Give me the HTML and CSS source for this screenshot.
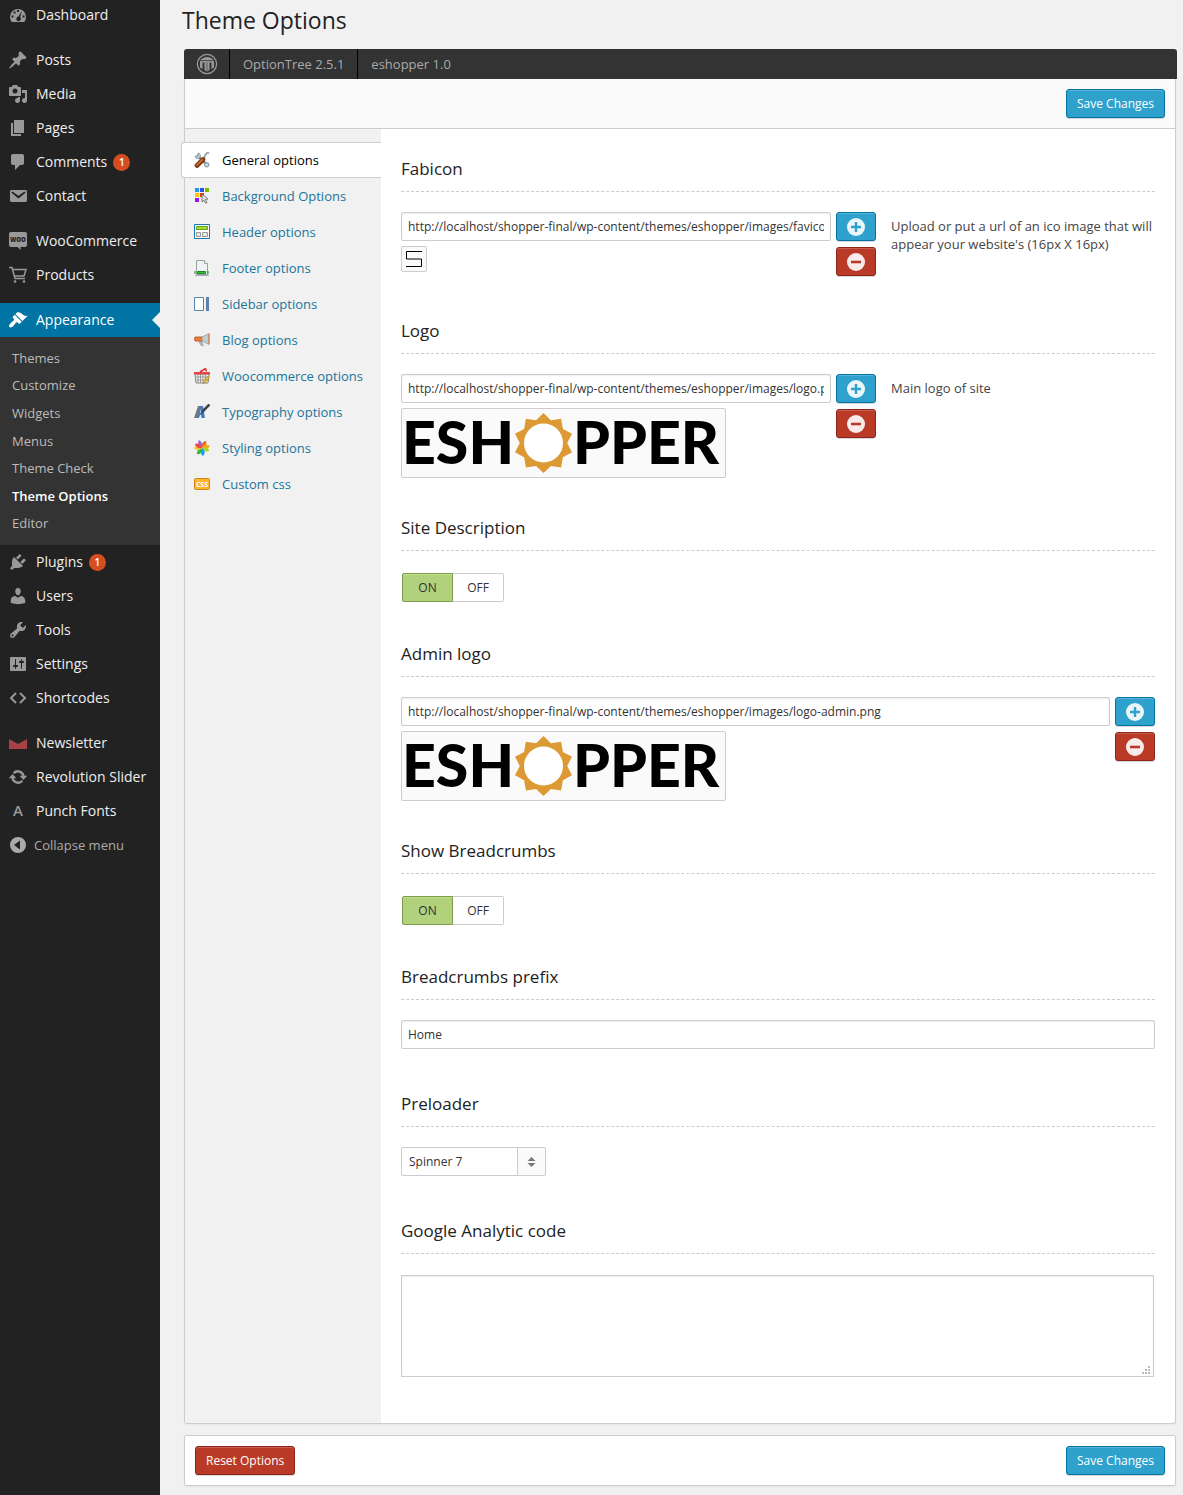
FILE: index.html
```html
<!DOCTYPE html>
<html lang="en">
<head>
<meta charset="utf-8">
<title>Theme Options</title>
<link rel="stylesheet" href="styles.css">
</head>
<body>
<svg class="defs" aria-hidden="true">
  <symbol id="plus" viewBox="0 0 18 18"><circle cx="9" cy="9" r="9" fill="#fff" fill-opacity=".9"/><path d="M9 4v10M4 9h10" stroke="#2ea2cc" stroke-width="2.4"/></symbol>
  <symbol id="minus" viewBox="0 0 18 18"><circle cx="9" cy="9" r="9" fill="#fff" fill-opacity=".9"/><path d="M4 9h10" stroke="#ba3a28" stroke-width="2.6"/></symbol>
</svg>
<div class="layout">
  <nav class="sidebar" aria-label="Main menu">
    <ul class="menu">
      <li><a href="#"><svg class="mi" viewBox="0 0 20 20"><path fill-rule="evenodd" d="M3.800 17h12.400A8 8 0 1 0 3.800 17zM9 5h2v2H9zM5.500 6.500h2v2h-2zM3.500 10.500h2v2h-2zM14.500 10.500h2v2h-2zM13.800 6l-1.600 6.200a2.300 2.300 0 1 1-1.800-.6z"/></svg>Dashboard</a></li>
      <li class="sep"></li>
      <li><a href="#"><svg class="mi" viewBox="0 0 20 20"><path d="M10.440 3.020l1.820-1.820 6.360 6.350-1.830 1.820c-1.050-.68-2.480-.57-3.410.36l-.75.75c-.92.93-1.040 2.350-.35 3.410l-1.830 1.820-2.410-2.410-2.800 2.790c-.42.42-3.380 2.710-3.800 2.290s1.860-3.390 2.280-3.810l2.790-2.790L4.100 9.360l1.830-1.820c1.050.69 2.480.57 3.400-.36l.75-.75c.93-.92 1.050-2.350.36-3.410z"/></svg>Posts</a></li>
      <li><a href="#"><svg class="mi" viewBox="0 0 20 20"><path d="M13 11V4c0-.55-.45-1-1-1h-1.670L9 1H5L3.670 3H2c-.55 0-1 .45-1 1v7c0 .55.45 1 1 1h10c.55 0 1-.45 1-1zM7 4.500c1.380 0 2.500 1.120 2.500 2.500S8.380 9.500 7 9.500 4.500 8.380 4.500 7 5.620 4.500 7 4.500zM14 6h5v10.500c0 1.380-1.120 2.500-2.500 2.500S14 17.880 14 16.500s1.120-2.500 2.500-2.500c.17 0 .34.020.5.050V9h-3V6zm-4 8.050V13h2v3.500c0 1.380-1.120 2.500-2.500 2.500S7 17.880 7 16.500 8.120 14 9.500 14c.17 0 .34.020.5.050z"/></svg>Media</a></li>
      <li><a href="#"><svg class="mi" viewBox="0 0 20 20"><path d="M6 15V2h10v13H6zm-1 1h8v2H3V5h2v11z"/></svg>Pages</a></li>
      <li><a href="#"><svg class="mi" viewBox="0 0 20 20"><path d="M5 2h9c1.100 0 2 .9 2 2v7c0 1.100-.9 2-2 2h-2l-5 5v-5H5c-1.100 0-2-.9-2-2V4c0-1.100.9-2 2-2z"/></svg>Comments <span class="count">1</span></a></li>
      <li><a href="#"><svg class="mi" viewBox="0 0 20 20"><path d="M3.870 4h13.250C18.370 4 19 4.590 19 5.790v8.420c0 1.190-.63 1.790-1.880 1.790H3.870c-1.250 0-1.880-.6-1.880-1.790V5.790c0-1.200.63-1.790 1.880-1.790zm6.620 8.600l6.740-5.530c.24-.2.430-.66.130-1.070-.29-.41-.82-.42-1.170-.17l-5.700 3.860L4.800 5.830c-.35-.25-.88-.24-1.170.17-.3.410-.11.870.130 1.070z"/></svg>Contact</a></li>
      <li class="sep"></li>
      <li><a href="#"><svg class="mi" viewBox="0 0 20 20"><path d="M3 1h14q2 0 2 2v11q0 2-2 2h-4.500v3l-3-3H3q-2 0-2-2V3q0-2 2-2z"/><text x="10" y="11" class="woo">WOO</text></svg>WooCommerce</a></li>
      <li><a href="#"><svg class="mi" viewBox="0 0 20 20"><path d="M1 2.500h3l3 11h10M4.500 4.500H18l-2 6.500H6.500" fill="none" stroke="#999" stroke-width="1.500"/><circle cx="7" cy="16.500" r="1.300"/><circle cx="16" cy="16.500" r="1.300"/></svg>Products</a></li>
      <li class="sep"></li>
      <li class="current"><a href="#"><svg class="mi" viewBox="0 0 20 20"><path d="M14.480 11.060L7.410 3.990l1.500-1.500c.5-.56 2.300-.47 3.510.32 1.210.8 1.430 1.280 2.910 2.100 1.180.64 2.450 1.260 4.450.85zm-.71.71L6.700 4.700 4.930 6.470c-.39.39-.39 1.020 0 1.410l1.060 1.060c.39.39.39 1.030 0 1.420-.6.600-1.430 1.110-2.210 1.690-.35.26-.7.530-1.010.84C1.430 14.230.4 16.080 1.400 17.070c.99 1 2.840-.03 4.180-1.360.31-.31.58-.66.85-1.020.57-.78 1.080-1.610 1.690-2.210.39-.39 1.020-.39 1.410 0l1.060 1.060c.39.39 1.020.39 1.410 0z"/></svg>Appearance</a>
        <ul class="submenu">
          <li><a href="#">Themes</a></li>
          <li><a href="#">Customize</a></li>
          <li><a href="#">Widgets</a></li>
          <li><a href="#">Menus</a></li>
          <li><a href="#">Theme Check</a></li>
          <li><a href="#" class="on" aria-current="page">Theme Options</a></li>
          <li><a href="#">Editor</a></li>
        </ul>
      </li>
      <li><a href="#"><svg class="mi" viewBox="0 0 20 20"><path d="M13.110 4.360L9.870 7.600 8 5.730l3.240-3.240c.35-.34 1.050-.2 1.560.32.520.51.660 1.210.31 1.550zm-8 1.770l.91-1.120 9.010 9.010-1.190.84c-.71.71-2.630 1.160-3.820 1.160H6.140L4.900 17.260c-.59.59-1.540.59-2.120 0-.59-.58-.59-1.530 0-2.120l1.240-1.240v-3.880c0-1.130.4-3.190 1.090-3.890zm7.260 3.970l3.240-3.240c.34-.35 1.040-.21 1.550.31.520.51.660 1.210.31 1.550l-3.240 3.250z"/></svg>Plugins <span class="count">1</span></a></li>
      <li><a href="#"><svg class="mi" viewBox="0 0 20 20"><path d="M10 9.250c-2.270 0-2.730-3.440-2.730-3.440C7 4.020 7.820 2 9.970 2c2.160 0 2.980 2.020 2.710 3.810 0 0-.41 3.440-2.680 3.440zm0 2.570L12.720 10c2.390 0 4.520 2.330 4.520 4.530v2.490s-3.650 1.130-7.240 1.130c-3.650 0-7.240-1.130-7.240-1.130v-2.490c0-2.250 1.940-4.480 4.470-4.480z"/></svg>Users</a></li>
      <li><a href="#"><svg class="mi" viewBox="0 0 20 20"><path d="M16.680 9.770c-1.340 1.340-3.300 1.670-4.950.99l-5.410 6.520c-.99.99-2.590.99-3.580 0s-.99-2.590 0-3.570l6.520-5.420c-.68-1.650-.35-3.610.99-4.950 1.280-1.280 3.120-1.620 4.720-1.060l-2.890 2.890 2.820 2.820 2.860-2.870c.53 1.580.18 3.390-1.080 4.650zM3.810 16.210c.4.39 1.040.39 1.430 0 .4-.4.4-1.040 0-1.430-.39-.4-1.030-.4-1.430 0-.39.39-.39 1.030 0 1.430z"/></svg>Tools</a></li>
      <li><a href="#"><svg class="mi" viewBox="0 0 20 20"><path d="M18 16V4c0-.55-.45-1-1-1H3c-.55 0-1 .45-1 1v12c0 .55.45 1 1 1h14c.55 0 1-.45 1-1zM8 11h1c.55 0 1 .45 1 1s-.45 1-1 1H8v1.500c0 .28-.22.5-.5.5s-.5-.22-.5-.5V13H6c-.55 0-1-.45-1-1s.45-1 1-1h1V5.500c0-.28.22-.5.5-.5s.5.22.5.5V11zm5-2h-1c-.55 0-1-.45-1-1s.45-1 1-1h1V5.500c0-.28.22-.5.5-.5s.5.22.5.5V7h1c.55 0 1 .45 1 1s-.45 1-1 1h-1v5.500c0 .28-.22.5-.5.5s-.5-.22-.5-.5V9z"/></svg>Settings</a></li>
      <li><a href="#"><svg class="mi" viewBox="0 0 20 20"><path d="M8 5l-5 5 5 5M12 5l5 5-5 5" fill="none" stroke="#999" stroke-width="2"/></svg>Shortcodes</a></li>
      <li class="sep"></li>
      <li><a href="#"><svg class="mi" viewBox="0 0 20 20"><path d="M1 6l9 5 9-5v10H1z" fill="#a94146"/></svg>Newsletter</a></li>
      <li><a href="#"><svg class="mi" viewBox="0 0 20 20"><path d="M4.500 10.500a5.600 5.600 0 0 0 9.800 3.300M15.500 9.500a5.600 5.600 0 0 0-9.800-3.300" fill="none" stroke="#999" stroke-width="2.400"/><path d="M.8 11.300L4.600 7l3.800 4.300zM11.600 8.700h7.600L15.400 13z"/></svg>Revolution Slider</a></li>
      <li><a href="#"><svg class="mi" viewBox="0 0 20 20"><text x="10" y="15" class="letter">A</text></svg>Punch Fonts</a></li>
      <li><button type="button" class="collapse"><svg class="mi" viewBox="0 0 20 20"><path fill-rule="evenodd" d="M10 2a8 8 0 1 0 0 16 8 8 0 0 0 0-16zm2 3.500v9L6 10z"/></svg>Collapse menu</button></li>
    </ul>
  </nav>
  <main class="main">
    <h1>Theme Options</h1>
    <div class="bar">
      <a href="#" class="bar-logo" aria-label="OptionTree"><svg viewBox="0 0 22 22"><circle cx="11" cy="11" r="9.600" fill="none" stroke="#999" stroke-width="1.300"/><path d="M4 7.500Q7 4 11 4t7 3.500v7L15.500 16V9.500h-2V17L11 18.500 8.500 17V9.500h-2V16L4 14.500z" fill="#999"/><path d="M4 7.600h14" stroke="#333" stroke-width=".8"/><path d="M11 9v9" stroke="#555" stroke-width=".8"/></svg></a>
      <span>OptionTree 2.5.1</span>
      <span>eshopper 1.0</span>
    </div>
    <form class="form">
      <div class="panel">
        <div class="toolbar"><button type="submit" class="btn blue">Save Changes</button></div>
        <div class="body">
          <ul class="tabs">
            <li class="active"><a href="#"><svg viewBox="0 0 16 16"><path d="M3 3l9.500 9.500" stroke="#829298" stroke-width="2.600"/><path d="M1 4q.5 3 3.500 2.500L6.500 4Q6 1 4 1v2.500L3 4.500z" fill="#c8d4d6" stroke="#7e8e92" stroke-width=".8"/><path d="M15 1.500l-1.500-1L11 3v1.500L6.500 9" stroke="#9aa5a8" stroke-width="1.800" fill="none"/><circle cx="12.800" cy="12.800" r="2.200" fill="#c8d4d6" stroke="#7e8e92"/><path d="M9 7.500L3 13.500" stroke="#7c3510" stroke-width="4.600" stroke-linecap="round"/><path d="M8.500 7.500L3 13" stroke="#c8692a" stroke-width="2" stroke-linecap="round"/></svg>General options</a></li>
            <li><a href="#"><svg viewBox="0 0 16 16"><path d="M1 0h4v4H1z" fill="#1b9cf0"/><path d="M6 0h4v4H6z" fill="#2f4fe0"/><path d="M11 0h4v4h-4z" fill="#7ab800"/><path d="M1 5h4v4H1z" fill="#ffc800"/><path d="M6 5h4v4H6z" fill="#e83820"/><path d="M1 10h4v4H1z" fill="#a010f0"/><path d="M8 6l6 5-2.500.5 1.500 3-1.500.7-1.500-3L8 14z" fill="#ddd" stroke="#666" stroke-width=".8"/></svg>Background Options</a></li>
            <li><a href="#"><svg viewBox="0 0 16 16"><path d="M.5.5h15v14H.5z" fill="#fff" stroke="#1c78b4"/><path d="M2.500 2.500h11v3h-11z" fill="#a4dc3c" stroke="#68a010"/><path d="M2.500 8.500h4v4h-4zM8.500 8.500h5v4h-5z" fill="#e8e8e8" stroke="#999"/></svg>Header options</a></li>
            <li><a href="#"><svg viewBox="0 0 16 16"><path d="M2.500.5h8l3 3v11h-11z" fill="#eef4f4" stroke="#96a4a4"/><path d="M10.500.5v3h3" fill="#fff" stroke="#96a4a4"/><path d="M1 15.500h14" stroke="#aaa"/><path d="M3.500 11.500h8v2h-8z" fill="#2fc82f" stroke="#168a16"/><path d="M1 11v3M14 11v3" stroke="#168a16"/></svg>Footer options</a></li>
            <li><a href="#"><svg viewBox="0 0 16 16"><path d="M.5 1.500h9v13h-9z" fill="#fff" stroke="#5b83ad"/><path d="M12 1h3v14h-3z" fill="#5b83ad"/></svg>Sidebar options</a></li>
            <li><a href="#"><svg viewBox="0 0 16 16"><path d="M4 9h4l2 5H7z" fill="#aab2b2"/><path d="M1 5h8v4H1q-1-2 0-4z" fill="#ee7b38" stroke="#b85020" stroke-width=".8"/><path d="M8 5l7-3.500v11L8 9z" fill="#c4cccc" stroke="#8f9999" stroke-width=".8"/><path d="M15 2v10" stroke="#e87030"/></svg>Blog options</a></li>
            <li><a href="#"><svg viewBox="0 0 16 16"><path d="M1 6h14l-1 9H2z" fill="#f4f4f4" stroke="#888"/><path d="M4 6v9M6.500 6v9M9 6v9M11.500 6v9M1.500 9h13M1.500 12h13" stroke="#888" stroke-width=".8"/><path d="M0 4h16v2.500H0z" fill="#e84848"/><path d="M6 4l5.500-3.500 1 3" stroke="#d83030" stroke-width="1.500" fill="none"/><path d="M9 14l5-6 1.500 1.300L11 15l-2 .5z" fill="#f0c040" stroke="#a07818" stroke-width=".6"/></svg>Woocommerce options</a></li>
            <li><a href="#"><svg viewBox="0 0 16 16"><path fill-rule="evenodd" d="M2 14L5 2h4l2 12H7.500L7 11H6l-1 3zM6.500 5L6 9h1z" fill="#4a78b8"/><path d="M0 14L4 2h2L3.500 14z" fill="#707880"/><path d="M15.500.5L9 7" stroke="#444" stroke-width="2.600"/><path d="M9.500 6.500q-2.500 0-3 3 2.500.3 4-2z" fill="#244a88"/></svg>Typography options</a></li>
            <li><a href="#"><svg viewBox="0 0 16 16"><path d="M8 8Q2 5 5 0q4 2 3 8z" fill="#8a68e0"/><path d="M8 8Q7 1 12 1q2 4-4 7z" fill="#f06a20"/><path d="M8 8q3-6 8-2-2 4-8 2z" fill="#f4a820"/><path d="M8 8q7-2 7 3-4 2-7-3z" fill="#a8d820"/><path d="M8 8q5 4 1 8-4-2-1-8z" fill="#209cf0"/><path d="M8 8q0 7-5 6-1-4 5-6z" fill="#38b838"/><path d="M8 8q-5 4-8 0 2-4 8 0z" fill="#f4c828"/><path d="M8 8Q2 9 1 4q4-2 7 4z" fill="#f04848"/></svg>Styling options</a></li>
            <li><a href="#"><svg viewBox="0 0 16 16"><rect x=".5" y="2.500" width="15" height="11" rx="1" fill="#ffb72c" stroke="#d08420"/><text x="8" y="11" class="css-mark">CSS</text></svg>Custom css</a></li>
          </ul>
          <div class="fields">
            <section class="field">
              <h3><label for="fabicon">Fabicon</label></h3>
              <div class="control split">
                <div class="upload">
                  <div class="value"><input id="fabicon" type="text" value="http://localhost/shopper-final/wp-content/themes/eshopper/images/favicon.ico">
                    <div class="preview"><svg class="favicon" viewBox="0 0 16 16" role="img" aria-label="Favicon"><path d="M16 .5H.5V8h15v7.500H0" fill="none" stroke="#000"/></svg></div></div>
                  <div class="actions"><button type="button" class="btn blue icon" aria-label="Add"><svg><use href="#plus"/></svg></button><button type="button" class="btn red icon" aria-label="Remove"><svg><use href="#minus"/></svg></button></div>
                </div>
                <p>Upload or put a url of an ico image that will appear your website's (16px X 16px)</p>
              </div>
            </section>
            <section class="field">
              <h3><label for="logo">Logo</label></h3>
              <div class="control split">
                <div class="upload">
                  <div class="value"><input id="logo" type="text" value="http://localhost/shopper-final/wp-content/themes/eshopper/images/logo.png">
                    <div class="preview"><svg class="logo" viewBox="0 0 323 68" role="img" aria-label="Eshopper"><text x="0" y="55" class="brand-text">ESH</text><path d="M141.500 4l7.400 7.200 10.200-1.500 1.800 10.200 9.100 4.900L165.200 34l4.800 9.300-9.100 4.900-1.800 10.200-10.200-1.500-7.400 7.100-7.400-7.100-10.200 1.500-1.800-10.200-9.100-4.900 4.800-9.300-4.800-9.200 9.100-4.900 1.800-10.200 10.200 1.500z" fill="#dd9933"/><circle cx="141.500" cy="34" r="19.500" fill="#fff"/><text x="171" y="55" class="brand-text">PPER</text></svg></div></div>
                  <div class="actions"><button type="button" class="btn blue icon" aria-label="Add"><svg><use href="#plus"/></svg></button><button type="button" class="btn red icon" aria-label="Remove"><svg><use href="#minus"/></svg></button></div>
                </div>
                <p>Main logo of site</p>
              </div>
            </section>
            <section class="field">
              <h3>Site Description</h3>
              <div class="control">
                <div class="toggle" role="radiogroup" aria-label="Site Description">
                  <label><input type="radio" name="desc" checked>ON</label><label><input type="radio" name="desc">OFF</label>
                </div>
              </div>
            </section>
            <section class="field">
              <h3><label for="admin-logo">Admin logo</label></h3>
              <div class="control">
                <div class="upload">
                  <div class="value"><input id="admin-logo" type="text" value="http://localhost/shopper-final/wp-content/themes/eshopper/images/logo-admin.png">
                    <div class="preview"><svg class="logo" viewBox="0 0 323 68" role="img" aria-label="Eshopper"><text x="0" y="55" class="brand-text">ESH</text><path d="M141.500 4l7.400 7.200 10.200-1.500 1.800 10.200 9.100 4.900L165.200 34l4.800 9.300-9.100 4.900-1.800 10.200-10.200-1.500-7.400 7.100-7.400-7.100-10.200 1.500-1.800-10.200-9.100-4.900 4.800-9.300-4.800-9.200 9.100-4.900 1.800-10.200 10.200 1.500z" fill="#dd9933"/><circle cx="141.500" cy="34" r="19.500" fill="#fff"/><text x="171" y="55" class="brand-text">PPER</text></svg></div></div>
                  <div class="actions"><button type="button" class="btn blue icon" aria-label="Add"><svg><use href="#plus"/></svg></button><button type="button" class="btn red icon" aria-label="Remove"><svg><use href="#minus"/></svg></button></div>
                </div>
              </div>
            </section>
            <section class="field">
              <h3>Show Breadcrumbs</h3>
              <div class="control">
                <div class="toggle" role="radiogroup" aria-label="Show Breadcrumbs">
                  <label><input type="radio" name="crumbs" checked>ON</label><label><input type="radio" name="crumbs">OFF</label>
                </div>
              </div>
            </section>
            <section class="field">
              <h3><label for="prefix">Breadcrumbs prefix</label></h3>
              <div class="control"><input id="prefix" type="text" value="Home"></div>
            </section>
            <section class="field">
              <h3><label for="preloader">Preloader</label></h3>
              <div class="control">
                <div class="select"><select id="preloader"><option>Spinner 7</option></select><svg viewBox="0 0 8 10"><path d="M4 0l4 4H0zM4 10L0 6h8z" fill="#777"/></svg></div>
              </div>
            </section>
            <section class="field">
              <h3><label for="analytics">Google Analytic code</label></h3>
              <div class="control">
                <div class="area"><textarea id="analytics"></textarea><svg viewBox="0 0 8 8"><path d="M6 0h2v2H6zM3 3h2v2H3zM6 3h2v2H6zM0 6h2v2H0zM3 6h2v2H3zM6 6h2v2H6z" fill="#bbb"/></svg></div>
              </div>
            </section>
          </div>
        </div>
      </div>
      <div class="panel footer"><button type="reset" class="btn red">Reset Options</button><button type="submit" class="btn blue">Save Changes</button></div>
    </form>
  </main>
</div>
</body>
</html>
```
FILE: styles.css
```css
* { box-sizing: border-box; }
body { margin: 0; background: #f1f1f1; color: #444; font: 13px/18px "Open Sans", sans-serif; }
ul { list-style: none; margin: 0; padding: 0; }
a { text-decoration: none; color: inherit; }
svg { display: block; flex: none; }
input, select, textarea, button { font: 12px/17px "Open Sans", sans-serif; color: #333; margin: 0; }
.defs { position: absolute; width: 0; height: 0; }
.layout { display: flex; min-height: 100vh; }

/* admin menu */
.sidebar { flex: 0 0 160px; background: #222; color: #eee; }
.menu { margin-top: -2px; }
.menu > li > a, .collapse { display: flex; align-items: center; gap: 8px; height: 34px; padding: 0 8px; font-size: 14px; line-height: 18px; white-space: nowrap; }
.menu .sep { height: 11px; }
.mi { width: 20px; height: 20px; fill: #999; }
.menu .count { display: block; width: 17px; height: 17px; margin-left: -2px; border-radius: 50%; background: #d54e21; color: #fff; font-size: 10px; font-weight: 600; line-height: 17px; text-align: center; }
.menu .current > a { position: relative; background: #0074a2; color: #fff; }
.current .mi { fill: #fff; }
.current > a::after { content: ""; position: absolute; right: 0; top: 9px; border: 8px solid transparent; border-left: 0; border-right-color: #f1f1f1; }
.submenu { display: flex; flex-direction: column; min-height: 208px; padding: 7px 12px 8px; background: #333; color: #bbb; }
.submenu li { flex: 1; display: flex; align-items: center; }
.submenu .on { color: #fff; font-weight: 600; }
.collapse { width: 100%; gap: 6px; border: 0; background: none; color: #aaa; font-size: 13px; }
.collapse .mi { fill: #aaa; }
.woo { font: 800 6px "Open Sans", sans-serif; fill: #222; text-anchor: middle; }
.letter { font: 600 15px "Open Sans", sans-serif; text-anchor: middle; }

/* page */
.main { flex: 1; min-width: 0; padding: 5px 6px 9px 24px; }
h1 { margin: 0 0 14px -2px; color: #222; font-size: 23px; font-weight: 400; line-height: 30px; }
.bar { display: flex; height: 30px; background: #333; color: #aaa; border-radius: 3px 3px 0 0; }
.bar > * { display: flex; align-items: center; padding: 0 13px; border-left: 1px solid #000; }
.bar > .bar-logo { padding: 0 11px 0 12px; border: 0; }
.bar-logo svg { width: 22px; height: 22px; }
.form { margin-right: 1px; }
.panel { background: #fff; border: 1px solid #ccc; border-top: 0; border-radius: 0 0 3px 3px; box-shadow: 0 1px 2px #0000000d; }
.toolbar { display: flex; justify-content: flex-end; height: 50px; padding: 10px; background: #fafafa; border-bottom: 1px solid #ccc; }
.footer { display: flex; justify-content: space-between; margin-top: 11px; padding: 10px; border-top: 1px solid #ccc; border-radius: 2px; }
.body { display: flex; }

.btn { height: 29px; padding: 0 10px; border: 1px solid; border-radius: 3px; color: #fff; line-height: 27px; box-shadow: inset 0 1px #ffffff33, 0 1px #00000026; }
.blue { background: #2ea2cc; border-color: #0074a2; }
.red { background: #ba3a28; border-color: #8c2517; }
.icon { display: flex; align-items: center; justify-content: center; width: 40px; padding: 0; }
.icon svg { width: 18px; height: 18px; }

/* section tabs */
.tabs { flex: 0 0 196px; padding-top: 13px; background: #f1f1f1; }
.tabs a { display: flex; align-items: center; gap: 12px; height: 36px; padding-left: 9px; color: #21759b; }
.tabs svg { width: 16px; height: 16px; }
.tabs .active { margin-left: -4px; background: #fff; border: 1px solid #ccc; border-right: 0; border-radius: 3px 0 0 3px; }
.tabs .active a { height: 34px; padding-left: 12px; color: #000; }
.css-mark { font: 700 7px "Open Sans", sans-serif; fill: #fff; text-anchor: middle; }

/* fields */
.fields { flex: 1; min-width: 0; padding: 0 20px 31px; }
.field { padding: 29px 0 10px; }
h3 { margin: 0 0 20px; padding-bottom: 11px; color: #222; font-size: 17px; font-weight: 400; line-height: 22px; border-bottom: 1px dashed #ccc; }
.control { display: flow-root; }
input[type="text"] { display: block; width: 100%; height: 29px; margin-bottom: 5px; padding: 5px 6px; background: #fff; border: 1px solid #ccc; border-radius: 2px; box-shadow: inset 0 1px 2px #00000012; }
.split { display: grid; grid-template-columns: minmax(0, 475fr) minmax(0, 264fr); gap: 15px; }
.split p { margin: 0; padding-top: 5px; }
.upload { display: flex; gap: 5px; }
.value { flex: 1; min-width: 0; }
.preview { width: fit-content; background: #fafafa; border: 1px solid #ccc; border-radius: 2px; }
.favicon { width: 16px; height: 16px; margin: 4px; }
.logo { width: 323px; height: 68px; }
.brand-text { font: 900 59px Lato, sans-serif; fill: #000; }
.actions { display: flex; flex-direction: column; gap: 6px; padding-bottom: 5px; }

.toggle { display: flex; width: fit-content; margin: 2px 1px; }
.toggle label { width: 51px; height: 29px; border: 1px solid #ccc; border-left: 0; border-radius: 0 2px 2px 0; color: #333; font-size: 12px; line-height: 27px; text-align: center; }
.toggle label:first-child { border-left: 1px solid; border-radius: 2px 0 0 2px; }
.toggle label:has(:checked) { background: #b1d17d; border-color: #7d9c4a; box-shadow: inset 0 1px #c5e08c; }
.toggle input { position: absolute; opacity: 0; }

.select { position: relative; width: 145px; margin-bottom: 5px; }
.select select { display: block; appearance: none; width: 100%; height: 29px; padding: 0 7px; border: 1px solid #ccc; border-radius: 2px; background: linear-gradient(90deg, #fff 115px, #ccc 115px, #ccc 116px, #fafafa 116px); }
.select svg { position: absolute; right: 10px; top: 10px; width: 9px; height: 10px; pointer-events: none; }
.area { position: relative; margin: 1px 1px 5px 0; }
textarea { display: block; width: 100%; height: 102px; resize: none; border: 1px solid #ccc; box-shadow: inset 0 1px 2px #00000012; }
.area svg { position: absolute; right: 4px; bottom: 3px; width: 8px; height: 8px; pointer-events: none; }
```
